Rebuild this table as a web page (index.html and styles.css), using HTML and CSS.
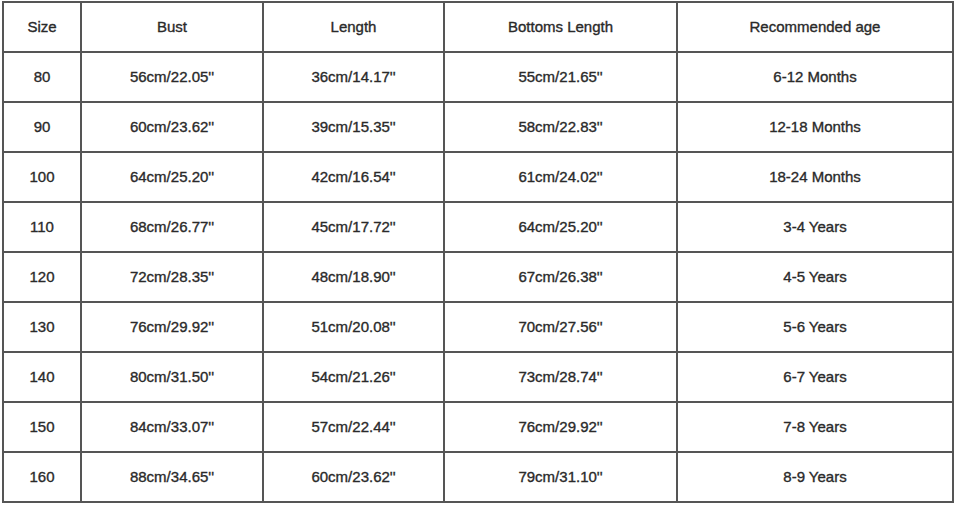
FILE: index.html
```html
<!DOCTYPE html>
<html>
<head>
<meta charset="utf-8">
<link rel="stylesheet" href="styles.css">
</head>
<body>
<table class="size-table">
<colgroup>
<col class="c-size"><col class="c-bust"><col class="c-len"><col class="c-bot"><col class="c-age">
</colgroup>
<thead>
<tr><th>Size</th><th>Bust</th><th>Length</th><th>Bottoms Length</th><th>Recommended age</th></tr>
</thead>
<tbody>
<tr><td>80</td><td>56cm/22.05''</td><td>36cm/14.17''</td><td>55cm/21.65''</td><td>6-12 Months</td></tr>
<tr><td>90</td><td>60cm/23.62''</td><td>39cm/15.35''</td><td>58cm/22.83''</td><td>12-18 Months</td></tr>
<tr><td>100</td><td>64cm/25.20''</td><td>42cm/16.54''</td><td>61cm/24.02''</td><td>18-24 Months</td></tr>
<tr><td>110</td><td>68cm/26.77''</td><td>45cm/17.72''</td><td>64cm/25.20''</td><td>3-4 Years</td></tr>
<tr><td>120</td><td>72cm/28.35''</td><td>48cm/18.90''</td><td>67cm/26.38''</td><td>4-5 Years</td></tr>
<tr><td>130</td><td>76cm/29.92''</td><td>51cm/20.08''</td><td>70cm/27.56''</td><td>5-6 Years</td></tr>
<tr><td>140</td><td>80cm/31.50''</td><td>54cm/21.26''</td><td>73cm/28.74''</td><td>6-7 Years</td></tr>
<tr><td>150</td><td>84cm/33.07''</td><td>57cm/22.44''</td><td>76cm/29.92''</td><td>7-8 Years</td></tr>
<tr><td>160</td><td>88cm/34.65''</td><td>60cm/23.62''</td><td>79cm/31.10''</td><td>8-9 Years</td></tr>
</tbody>
</table>
</body>
</html>
```
FILE: styles.css
```css
html, body {
  margin: 0;
  padding: 0;
  background: #fff;
}
body {
  padding: 1px 3px 0 2px;
  font-family: "Liberation Sans", Arial, sans-serif;
}
.size-table {
  border-collapse: collapse;
  table-layout: fixed;
  width: 950px;
}
.c-size { width: 78px; }
.c-bust { width: 182px; }
.c-len { width: 181px; }
.c-bot { width: 233px; }
.c-age { width: 276px; }
.size-table th,
.size-table td {
  border: 2px solid #555;
  height: 50px;
  padding: 0 0 2px 0;
  box-sizing: border-box;
  text-align: center;
  vertical-align: middle;
  font-size: 15px;
  line-height: 17px;
  font-weight: normal;
  color: #2a2a2a;
  -webkit-text-stroke: 0.35px #2a2a2a;
}
```
